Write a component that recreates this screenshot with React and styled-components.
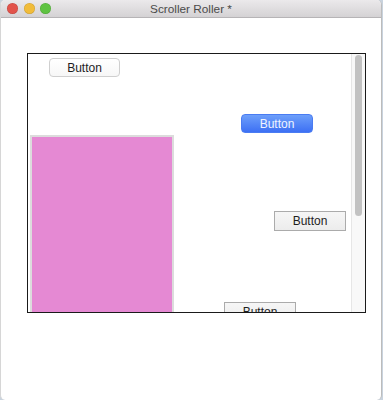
import styled, { createGlobalStyle } from "styled-components"

const Global = createGlobalStyle`
html, body {
    margin:0;
    padding:0;
    background:#c9d3de;
}
body{
    font-family:"Liberation Sans", Arial, sans-serif;
}
`

const Windowbox = styled.div`
width:382px;
height:400px;
box-sizing:border-box;
display:flex;
flex-direction:column;
background:#ffffff;
border-right:1px solid #bcbcbc;
border-left:1px solid #d6d6d6;
border-radius:5px;
overflow:hidden;
`

const Titlebar = styled.div`
height:18px;
flex-shrink:0;
box-sizing:border-box;
display:flex;
align-items:center;
position:relative;
padding-left:6px;
gap:5.5px;
background:linear-gradient(#ebe9eb, #d4d2d4);
border-bottom:1px solid #b6b4b6;
`

const Light = styled.span`
width:11px;
height:11px;
border-radius:50%;
background:${(p) => p.color};
box-shadow:inset 0 0 0 0.5px rgba(0,0,0,0.15);
`

const Title = styled.div`
position:absolute;
left:0;
right:0;
top:0;
bottom:0;
display:flex;
align-items:center;
justify-content:center;
font-size:11.8px;
color:#4a4a4a;
pointer-events:none;
`

const Content = styled.div`
flex:1;
padding:35px 0 0 26px;
`

const Scrollview = styled.div`
width:339px;
height:260px;
box-sizing:border-box;
border:1px solid #1a1a1a;
display:flex;
background:#ffffff;
`

const Docclip = styled.div`
flex:1;
position:relative;
overflow:hidden;
`

const Track = styled.div`
width:14px;
box-sizing:border-box;
border-left:1px solid #e6e6e6;
background:#f8f8f8;
padding:1px 2px 0 3px;
`

const Thumb = styled.div`
width:7px;
height:161px;
border-radius:4px;
background:#c2c2c2;
`

const Pushbtn = styled.button`
position:absolute;
box-sizing:border-box;
margin:0;
padding:0;
font-family:"Liberation Sans", Arial, sans-serif;
font-size:12px;
line-height:1;
display:flex;
align-items:center;
justify-content:center;
color:${(p) => (p.$blue ? "#eef3ff" : "#1e1e1e")};
background:${(p) =>
    p.$blue
        ? "linear-gradient(#6d9ffa, #3d70f4)"
        : "linear-gradient(#ffffff, #f7f7f7)"};
border:1px solid ${(p) => (p.$blue ? "#4a7cf2" : "#cfcfcf")};
border-radius:4px;
`

const Squarebtn = styled.button`
position:absolute;
box-sizing:border-box;
margin:0;
padding:0;
width:72px;
height:20px;
font-family:"Liberation Sans", Arial, sans-serif;
font-size:12px;
line-height:1;
display:flex;
align-items:center;
justify-content:center;
color:#1e1e1e;
background:linear-gradient(#f6f6f6, #ececec);
border:1px solid #ababab;
border-radius:0;
`

const Pinkbox = styled.div`
position:absolute;
left:2px;
top:81px;
width:144px;
height:300px;
box-sizing:border-box;
border:2px solid #dcdcdc;
border-bottom:none;
background:#e589d3;
`

export default function App() {
    return (
        <>
            <Global />
            <Windowbox>
                <Titlebar>
                    <Light color="#e2534b" />
                    <Light color="#f1bc3a" />
                    <Light color="#5fc342" />
                    <Title>Scroller Roller *</Title>
                </Titlebar>
                <Content>
                    <Scrollview>
                        <Docclip>
                            <Pushbtn style={{ left: 21, top: 4, width: 71, height: 19 }}>Button</Pushbtn>
                            <Pushbtn $blue style={{ left: 213, top: 60, width: 72, height: 19 }}>Button</Pushbtn>
                            <Pinkbox />
                            <Squarebtn style={{ left: 246, top: 157 }}>Button</Squarebtn>
                            <Squarebtn style={{ left: 196, top: 248 }}>Button</Squarebtn>
                        </Docclip>
                        <Track>
                            <Thumb />
                        </Track>
                    </Scrollview>
                </Content>
            </Windowbox>
        </>
    )
}
